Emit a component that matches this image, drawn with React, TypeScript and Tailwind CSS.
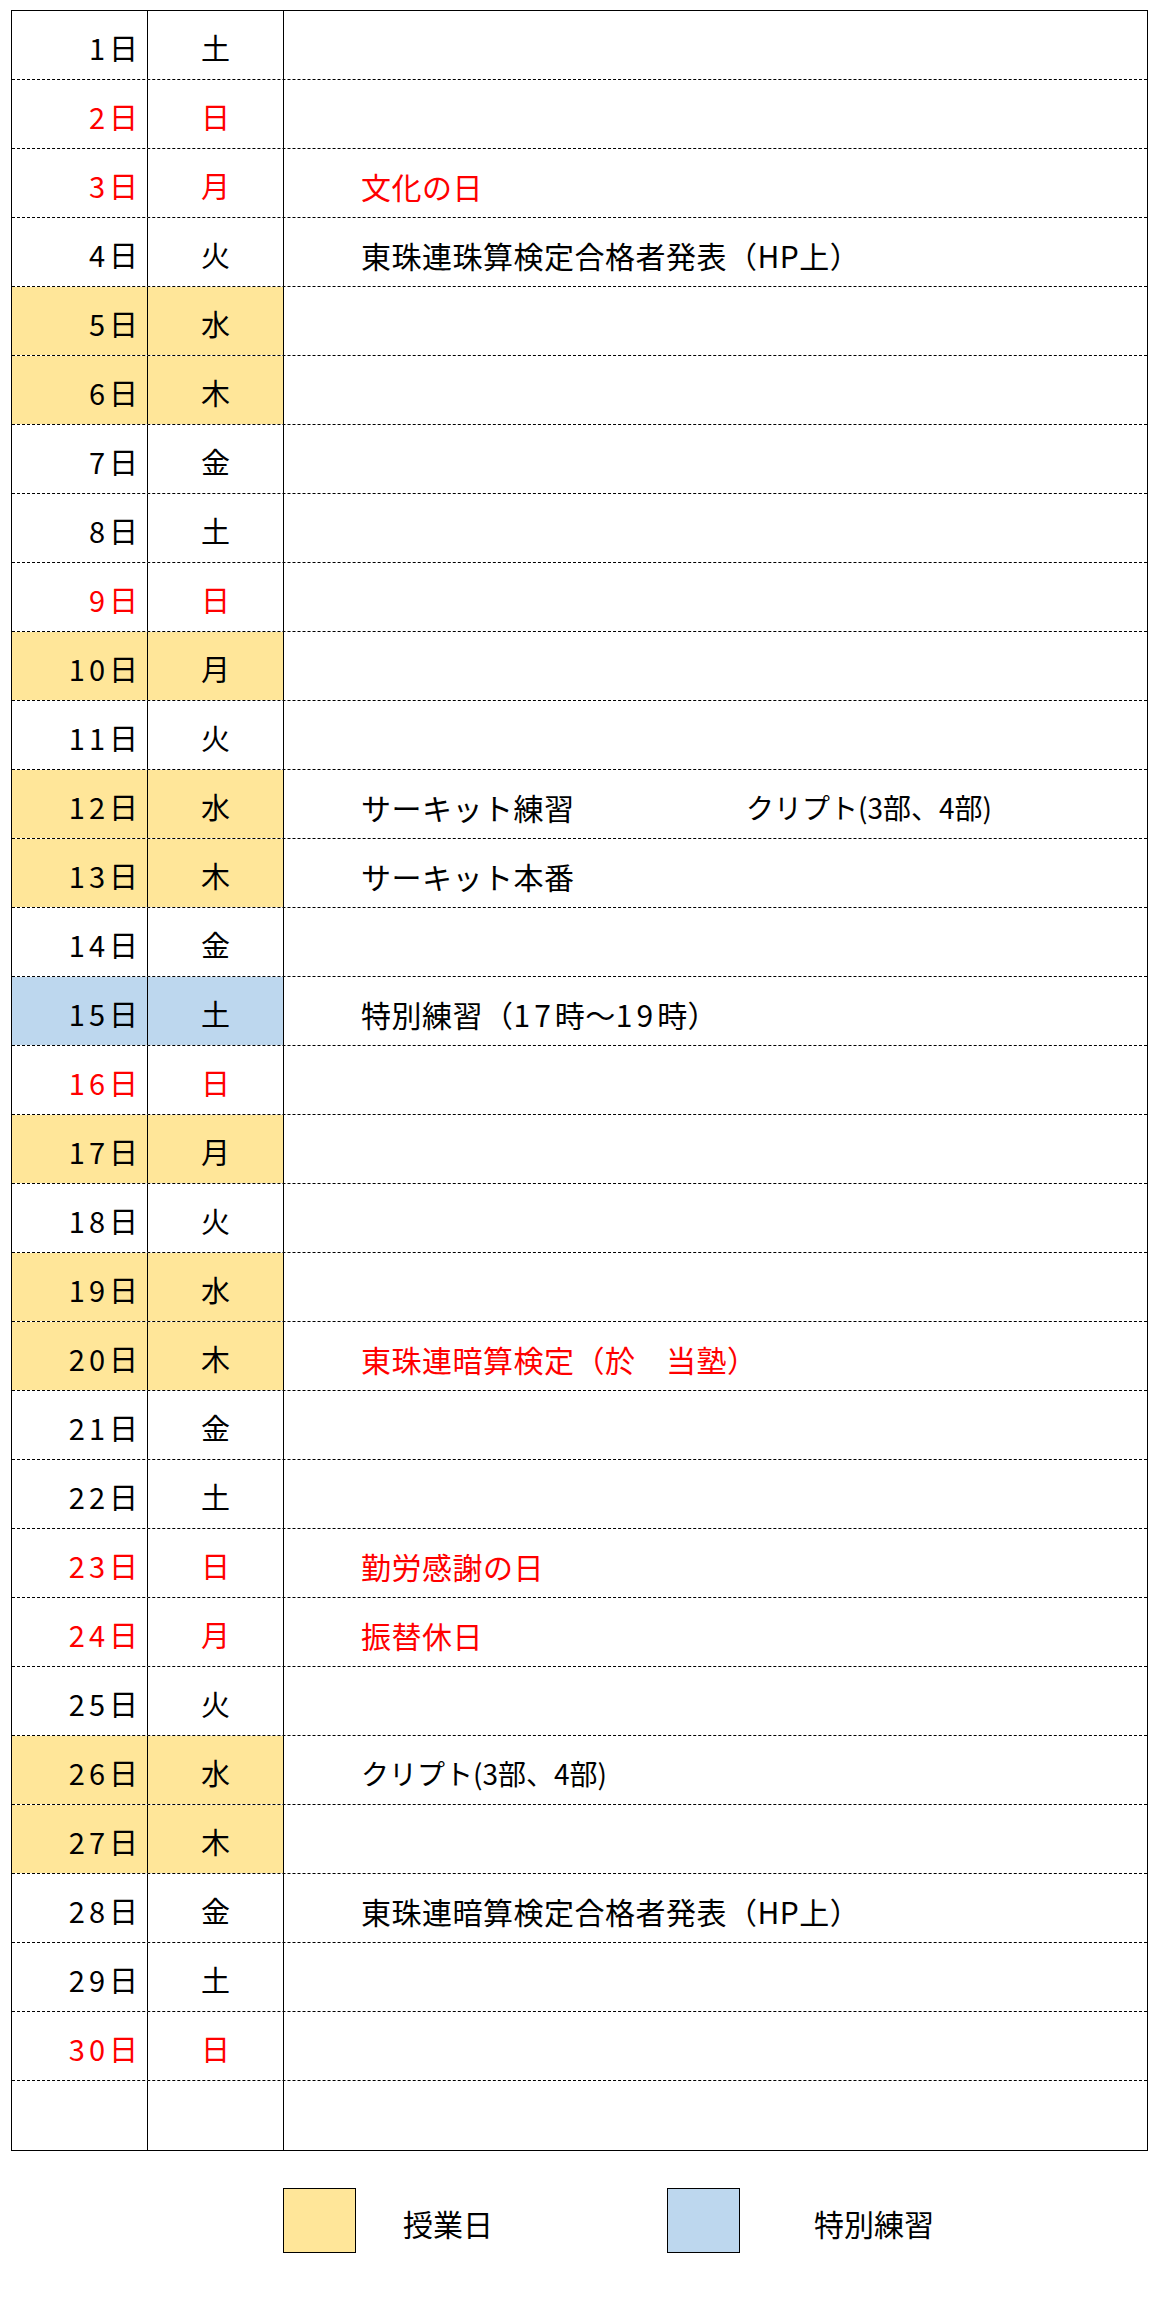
import React from "react";

type Row = {
  d: number;
  w: string;
  red?: boolean;
  bg?: "y" | "b";
  text?: React.ReactNode;
  textRed?: boolean;
};

const num = (s: string) => <span className="tracking-[4px]">{s}</span>;

const crypt = (
  <span className="text-[28px] tracking-normal">クリプト(3部、4部)</span>
);

const rows: Row[] = [
  { d: 1, w: "土" },
  { d: 2, w: "日", red: true },
  { d: 3, w: "月", red: true, text: "文化の日", textRed: true },
  { d: 4, w: "火", text: "東珠連珠算検定合格者発表（HP上）" },
  { d: 5, w: "水", bg: "y" },
  { d: 6, w: "木", bg: "y" },
  { d: 7, w: "金" },
  { d: 8, w: "土" },
  { d: 9, w: "日", red: true },
  { d: 10, w: "月", bg: "y" },
  { d: 11, w: "火" },
  {
    d: 12,
    w: "水",
    bg: "y",
    text: (
      <>
        <span className="inline-block w-[385px]">サーキット練習</span>
        {crypt}
      </>
    ),
  },
  { d: 13, w: "木", bg: "y", text: "サーキット本番" },
  { d: 14, w: "金" },
  {
    d: 15,
    w: "土",
    bg: "b",
    text: (
      <>
        特別練習（{num("17")}時～{num("19")}時）
      </>
    ),
  },
  { d: 16, w: "日", red: true },
  { d: 17, w: "月", bg: "y" },
  { d: 18, w: "火" },
  { d: 19, w: "水", bg: "y" },
  { d: 20, w: "木", bg: "y", text: "東珠連暗算検定（於　当塾）", textRed: true },
  { d: 21, w: "金" },
  { d: 22, w: "土" },
  { d: 23, w: "日", red: true, text: "勤労感謝の日", textRed: true },
  { d: 24, w: "月", red: true, text: "振替休日", textRed: true },
  { d: 25, w: "火" },
  { d: 26, w: "水", bg: "y", text: crypt },
  { d: 27, w: "木", bg: "y" },
  { d: 28, w: "金", text: "東珠連暗算検定合格者発表（HP上）" },
  { d: 29, w: "土" },
  { d: 30, w: "日", red: true },
];

function bgClass(bg?: "y" | "b") {
  if (bg === "y") return "bg-[#FFE699]";
  if (bg === "b") return "bg-[#BDD7EE]";
  return "bg-white";
}

export default function App() {
  return (
    <div
      className="w-[1160px] h-[2320px] bg-white text-black pt-[10px] pl-[11px]"
      style={{ fontFamily: '"Noto Sans CJK JP", "Noto Sans", sans-serif' }}
    >
      <div className="w-[1137px] border border-black">
        {rows.map((r) => (
          <div
            key={r.d}
            className="flex h-[69px] border-b border-dashed border-black text-[29px] leading-none"
          >
            <div
              className={`w-[136px] shrink-0 border-r border-black flex items-center justify-end pr-[9px] pt-[5px] ${bgClass(
                r.bg
              )} ${r.red ? "text-[#FF0000]" : "text-black"}`}
            >
              {num(String(r.d))}日
            </div>
            <div
              className={`w-[136px] shrink-0 border-r border-black flex items-center justify-center pt-[5px] ${bgClass(
                r.bg
              )} ${r.red ? "text-[#FF0000]" : "text-black"}`}
            >
              {r.w}
            </div>
            <div
              className={`flex-1 flex items-center pl-[77px] pt-[5px] whitespace-nowrap text-[30px] tracking-[0.5px] ${
                r.textRed ? "text-[#FF0000]" : "text-black"
              }`}
            >
              {r.text}
            </div>
          </div>
        ))}
        <div className="flex h-[69px]">
          <div className="w-[136px] shrink-0 border-r border-black" />
          <div className="w-[136px] shrink-0 border-r border-black" />
          <div className="flex-1" />
        </div>
      </div>

      <div className="flex items-center pl-[272px] mt-[37px] text-[30px] leading-none">
        <div className="w-[384px] flex items-center">
          <div className="w-[73px] h-[65px] border border-black bg-[#FFE699]" />
          <div className="ml-[47px] pt-[4px]">授業日</div>
        </div>
        <div className="flex items-center">
          <div className="w-[73px] h-[65px] border border-black bg-[#BDD7EE]" />
          <div className="ml-[74px] pt-[4px]">特別練習</div>
        </div>
      </div>
    </div>
  );
}
